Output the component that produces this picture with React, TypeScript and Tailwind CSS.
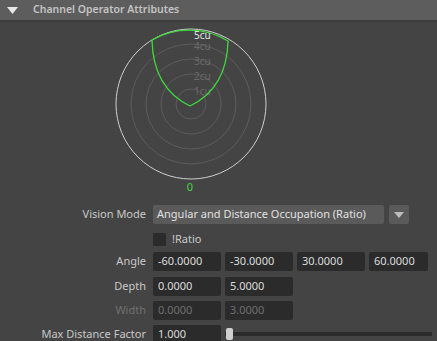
import React from 'react';

const font = { fontFamily: '"Noto Sans", "Open Sans", sans-serif' };

function Field({ value, dim = false, w = 'w-[68px]' }: { value: string; dim?: boolean; w?: string }) {
  return (
    <div
      className={`${w} h-[19px] bg-[#2b2b2b] rounded-[2px] pl-[5px] flex items-center text-[11px] ${
        dim ? 'text-[#6f6f6f]' : 'text-[#dcdcdc]'
      }`}
    >
      {value}
    </div>
  );
}

function Row({ label, dim = false, children }: { label: string; dim?: boolean; children?: React.ReactNode }) {
  return (
    <div className="flex items-center">
      <div className={`w-[147px] pr-[1px] text-right text-[11px] ${dim ? 'text-[#707070]' : 'text-[#c8c8c8]'}`}>
        {label}
      </div>
      <div className="ml-[6px] flex items-center gap-[4px] flex-1">{children}</div>
    </div>
  );
}

function Chart() {
  const cx = 191;
  const cy = 104;
  return (
    <svg width="437" height="176" viewBox="0 22 437 176" className="block">
      {[15, 30, 45, 60].map((r) => (
        <circle key={r} cx={cx} cy={cy} r={r} fill="none" stroke="#5c5c5c" strokeWidth="1" />
      ))}
      <circle cx={cx} cy={cy} r={75} fill="none" stroke="#cfcfcf" strokeWidth="1" />
      <g fontSize="10" fill="#6a6a6a" style={font}>
        <text x="194" y="50">4cu</text>
        <text x="194" y="65">3cu</text>
        <text x="194" y="80">2cu</text>
        <text x="194" y="95">1cu</text>
      </g>
      <path
        d="M 190 106 Q 153 88 152 40 A 75 75 0 0 1 228 41 Q 227 88 190 106 Z"
        fill="none"
        stroke="#3fd93f"
        strokeWidth="1.3"
      />
      <text x="194" y="39" fontSize="10" fill="#e6e6e6" style={font}>
        5cu
      </text>
      <text x="190" y="191" fontSize="11" fill="#3fd93f" textAnchor="middle" style={font}>
        0
      </text>
    </svg>
  );
}

export default function App() {
  return (
    <div className="w-[437px] h-[341px] bg-[#444444] overflow-hidden" style={font}>
      {/* Section header */}
      <div className="h-[20px] bg-[#5d5d5d] flex items-center border-b-2 border-[#3c3c3c] box-content">
        <svg width="11" height="7" viewBox="0 0 11 7" className="ml-[7px]">
          <path d="M0 0 H11 L5.5 7 Z" fill="#e8e8e8" />
        </svg>
        <span className="ml-[15px] text-[10.5px] font-semibold text-[#c4c4c4]">Channel Operator Attributes</span>
      </div>

      <Chart />

      <div className="flex flex-col">
        <div className="mt-[7px]">
          <Row label="Vision Mode">
            <div className="w-[231px] h-[19px] bg-[#5a5a5a] rounded-[2px] pl-[4px] flex items-center text-[11px] text-[#e0e0e0] whitespace-nowrap">
              Angular and Distance Occupation (Ratio)
            </div>
            <div className="ml-[1px] w-[20px] h-[19px] bg-[#5a5a5a] rounded-[2px] flex items-center justify-center">
              <svg width="10" height="6" viewBox="0 0 10 6">
                <path d="M0 0 H10 L5 6 Z" fill="#bdbdbd" />
              </svg>
            </div>
          </Row>
        </div>

        <div className="mt-[7px] flex items-center">
          <div className="ml-[153px] w-[13px] h-[13px] bg-[#2b2b2b] rounded-[1px]" />
          <span className="ml-[6px] text-[11px] text-[#c8c8c8]">!Ratio</span>
        </div>

        <div className="mt-[4px]">
          <Row label="Angle">
            <Field value="-60.0000" />
            <Field value="-30.0000" />
            <Field value="30.0000" />
            <Field value="60.0000" w="w-[59px]" />
          </Row>
        </div>

        <div className="mt-[6px]">
          <Row label="Depth">
            <Field value="0.0000" />
            <Field value="5.0000" />
          </Row>
        </div>

        <div className="mt-[5px]">
          <Row label="Width" dim>
            <Field value="0.0000" dim />
            <Field value="3.0000" dim />
          </Row>
        </div>

        <div className="mt-[5px]">
          <Row label="Max Distance Factor">
            <Field value="1.000" />
            <div className="relative flex-1 h-[19px] mr-[5px] flex items-center">
              <div className="w-full h-[4px] bg-[#2b2b2b]" />
              <div className="absolute left-[1px] top-[3px] w-[7px] h-[12px] bg-[#d0d0d0] rounded-[2px]" />
            </div>
          </Row>
        </div>
      </div>
    </div>
  );
}
